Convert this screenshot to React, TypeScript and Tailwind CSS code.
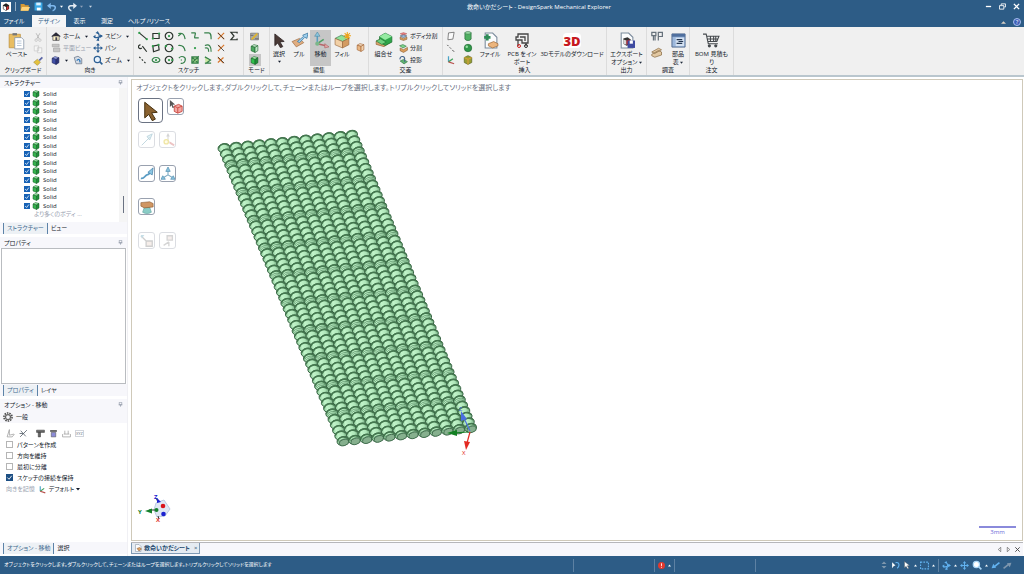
import React from "react";
import clsx from "clsx";

type IconProps = { className?: string; children: React.ReactNode };

const Icon = ({ className = "size-[10px]", children }: IconProps) => (
  <svg viewBox="0 0 16 16" fill="none" stroke="none" className={clsx("shrink-0", className)} aria-hidden="true">
    {children}
  </svg>
);

const Caret = ({ className = "size-[3px] text-gray-800" }: { className?: string }) => (
  <svg viewBox="0 0 8 8" className={clsx("shrink-0", className)} fill="currentColor" aria-hidden="true">
    <path d="M0 2h8L4 7z" />
  </svg>
);

const Cube = ({ className, top = "#8fe29a", left = "#1f8f38", right = "#35b24d", line = "#155c26" }: { className?: string; top?: string; left?: string; right?: string; line?: string }) => (
  <Icon className={className}>
    <path d="M2 4l5-3 7 2-5 3z" fill={top} stroke={line} />
    <path d="M2 4l7 2v9l-7-3z" fill={right} stroke={line} />
    <path d="M9 6l5-3v9l-5 3z" fill={left} stroke={line} />
  </Icon>
);

const Pointer = ({ className, fill = "#4a3a36", stroke = "#2a2020" }: { className?: string; fill?: string; stroke?: string }) => (
  <Icon className={className}>
    <path d="M3 1l10 8-4.500.5 3 5-2.500 1.200-2.800-5L3 13.500z" fill={fill} stroke={stroke} strokeWidth=".8" />
  </Icon>
);

const Move = ({ className = "size-[10px]", color = "#2c5f93" }: { className?: string; color?: string }) => (
  <Icon className={className}>
    <path d="M8 2v12M2 8h12" stroke={color} strokeWidth="1.800" />
    <path d="M8 0l3 4H5zM8 16l3-4H5zM0 8l4-3v6zM16 8l-4-3v6z" fill={color} />
  </Icon>
);

const Spin = ({ className = "size-[10px]", color = "#2c5f93" }: { className?: string; color?: string }) => (
  <Icon className={className}>
    <path d="M7 14c4-3 4-9 0-12M2 10c4 1 9 0 12-3" stroke={color} strokeWidth="2" />
    <path d="M4 3l4-3 1 5zM0 9l4-3v6zM16 8l-5-3v6zM5 15l4-4 1 5z" fill={color} />
  </Icon>
);

const Magnifier = ({ color = "#2c5f93", fill = "#e8f2fb" }) => (
  <Icon className="size-[10px]">
    <circle cx="7" cy="7" r="5" fill={fill} stroke={color} strokeWidth="2" />
    <path d="M11 11l4 4" stroke={color} strokeWidth="2.500" />
  </Icon>
);

const Axes = ({ className }: { className?: string }) => (
  <Icon className={className}>
    <path d="M4 2v9" stroke="#4aa3c7" strokeWidth="2" />
    <path d="M4 11l7-5" stroke="#3fa35c" strokeWidth="2" />
    <path d="M4 11l9 3" stroke="#b8524e" strokeWidth="2" />
  </Icon>
);

const Page = () => <path d="M3 1h7l4 4v10H3z" fill="#fbfcfd" stroke="#7b8b9c" />;

const sketchTools = [
  { name: "線", d: "M2 3l12 10", black: true, dots: [[2, 3], [14, 13]] },
  { name: "長方形", d: "M3 4h10v8H3z", black: true, dots: [[3, 12], [13, 4]] },
  { name: "円", d: "M8 2a6 6 0 1 0 .1 0z", black: true, dots: [[8, 8]] },
  { name: "接線円弧", d: "M2 4c8-2 10 3 11 9M2 8l5-4" },
  { name: "スプライン", d: "M2 3h6c2 0-2 8 0 8h6" },
  { name: "コーナー", d: "M2 3h7c4 0 4 4 4 10" },
  { name: "トリム", d: "M3 3l10 10M3 13L13 3", orange: true },
  { name: "方程式", d: "M13 4V2H3l5 6-5 6h10v-2", black: true },
  { name: "接線", d: "M4 3a3 3 0 1 0 2 5M7 5l7 9", black: true },
  { name: "3点長方形", d: "M3 5l9-2 1 8-9 3z", black: true, dots: [[3, 5], [12, 3]] },
  { name: "3点円", d: "M8 2a6 6 0 1 0 .1 0z", black: true, dots: [[3, 5], [13, 9]] },
  { name: "円弧", d: "M2 4c7-1 10 3 11 9" },
  { name: "点", d: "", dots: [[8, 8]] },
  { name: "オフセット", d: "M3 4c8-3 10 2 10 10M3 8c5-1 6 1 6 6" },
  { name: "分割", d: "M3 13L13 3M4 4l3 3", orange: true },
  null,
  { name: "補助線", d: "M2 3l2 2M6 7l2 2M10 11l2 2", black: true },
  { name: "楕円", d: "M8 4a6 4 0 1 0 .1 0z", dots: [[8, 8]] },
  { name: "多角形", d: "M8 2a6 6 0 1 0 .1 0z", black: true, dots: [[8, 8], [13, 8]] },
  { name: "スイープ円弧", d: "M3 5c4-5 12-2 10 4-1 4-5 5-7 4M6 8h2" },
  { name: "面", d: "M3 3h10v10H3zM3 13L14 2M3 3l10 10", fill: "#9fd08a" },
  { name: "投影", d: "M3 3l9 5-8 6M3 13h10", fill: "#cbe7a4" },
  { name: "曲げ", d: "M3 4l9 9M3 12l9-8", orange: true },
] as ({ name: string; d: string; black?: boolean; orange?: boolean; fill?: string; dots?: number[][] } | null)[];

const Group = ({ label, className, children }: { label: string; className: string; children: React.ReactNode }) => (
  <section className={clsx("flex shrink-0 flex-col border-r border-[#dcdcdc]", className)} aria-label={label}>
    <div className="flex flex-1 items-start pt-[3px]">{children}</div>
    <p className="h-[11px] text-center leading-[9px]">{label}</p>
  </section>
);

const BigButton = ({ icon, children, className }: { icon: React.ReactNode; children: React.ReactNode; className?: string }) => (
  <button className={clsx("flex h-[36px] shrink-0 flex-col items-center pt-[1px] leading-[8px]", className)}>
    <span className="flex h-[19px] items-center">{icon}</span>
    {children}
  </button>
);

const RowButton = ({ icon, text, caret, muted }: { icon: React.ReactNode; text?: string; caret?: boolean; muted?: boolean }) => (
  <button className={clsx("flex h-[12px] items-center gap-[2px] whitespace-nowrap", muted && "text-gray-400")}>
    {icon}
    {text}
    {caret && <Caret className="ml-[3px] size-[3px]" />}
  </button>
);

function TitleBar() {
  return (
    <header className="bg-[#2d5c86] text-white">
      <div className="grid h-[13px] grid-cols-[1fr_auto_1fr] items-center">
        <div className="flex items-center gap-[4px] pl-[1px]">
          <Icon className="size-[10px]">
            <path d="M0 0h16v16H0z" fill="#fff" />
            <path d="M8 2l5 3v6l-5 3-5-3V5z" fill="#222" />
            <path d="M4 6l4 2v5l-4-2z" fill="#fff" />
            <path d="M9 8l3-2v5l-3 2z" fill="#d33" />
          </Icon>
          <span className="h-[9px] w-px bg-white/50" />
          <button aria-label="開く">
            <Icon className="size-[10px]"><path d="M1 3h6l1 2h6v9H1z" fill="#d69a35" /><path d="M3 8h13l-3 6H1z" fill="#ffd57a" /></Icon>
          </button>
          <button aria-label="保存">
            <Icon className="size-[9px]"><path d="M1 1h14v14H1z" fill="#39a7e6" /><path d="M4 1h8v5H4z" fill="#d8f0ff" /><path d="M5 10h7v5H5z" fill="#fff" /></Icon>
          </button>
          <button aria-label="元に戻す" className="flex items-center gap-[3px]">
            <Icon className="size-[10px]"><path d="M3 6h7c5 0 4 7-1 8" stroke="#7fb9ee" strokeWidth="2.500" /><path d="M0 6l6-5v10z" fill="#7fb9ee" /></Icon>
            <Caret className="size-[3px]" />
          </button>
          <button aria-label="やり直し" className="flex items-center gap-[3px]">
            <Icon className="size-[10px]"><path d="M13 6H6C1 6 2 13 7 14" stroke="#e3ebf3" strokeWidth="2.500" /><path d="M16 6l-6-5v10z" fill="#e3ebf3" /></Icon>
            <Caret className="size-[3px] text-slate-400" />
          </button>
          <Caret className="ml-[2px] size-[3px] text-slate-300" />
        </div>
        <h1 className="pl-[54px] text-[6px] leading-[12px]">救命いかだシート - DesignSpark Mechanical Explorer</h1>
        <div className="flex items-center justify-end gap-[7px] pr-[4px]">
          <button aria-label="最小化"><Icon className="size-[7px]"><path d="M2 8h12" stroke="#fff" strokeWidth="3" /></Icon></button>
          <button aria-label="元のサイズに戻す"><Icon className="size-[7px]"><path d="M5 5V2h10v7h-3M1 6h10v8H1z" stroke="#fff" strokeWidth="2" /></Icon></button>
          <button aria-label="閉じる"><Icon className="size-[7px]"><path d="M2 2l12 12M14 2L2 14" stroke="#fff" strokeWidth="3" /></Icon></button>
        </div>
      </div>
      <nav className="flex h-[14px] items-end text-[6px] leading-[12px]">
        <button className="w-[32px] pr-[4px] text-center">ファイル</button>
        <button className="h-[12px] w-[34px] bg-[#f5f6f7] text-center text-[#2d5c86]">デザイン</button>
        <button className="w-[27px] text-center">表示</button>
        <button className="w-[28px] text-center">測定</button>
        <button className="w-[56px] text-center whitespace-nowrap">ヘルプ /リソース</button>
        <div className="ml-auto flex items-center gap-[7px] pr-[3px] pb-[1px]">
          <Icon className="size-[5px]"><path d="M0 12h16L8 4z" fill="#d9d0c4" /></Icon>
          <button aria-label="ヘルプ" className="size-[8px] rounded-full border border-[#a9c0ee] bg-[#3f60b8] text-center leading-[6px]">?</button>
        </div>
      </nav>
    </header>
  );
}

function Ribbon() {
  return (
    <div className="flex h-[50px] overflow-hidden border-b-2 border-[#b9c6ce] bg-[#f0f0f0] text-[6px] text-gray-900">
      <Group label="クリップボード" className="w-[47px]">
        <BigButton className="w-[33px]" icon={<Icon className="size-[18px]"><path d="M1 2h10v12H1z" fill="#e8bd62" stroke="#b98a35" strokeWidth=".6" /><path d="M4 1h4v2H4z" fill="#777" /><path d="M6 5h6l2 2v8H6z" fill="#fff" stroke="#8797aa" strokeWidth=".7" /><path d="M8 8h4M8 10h4M8 12h4" stroke="#9aaec5" strokeWidth=".6" /></Icon>}>ペースト</BigButton>
        <div className="flex flex-col gap-[2px] pt-[2px]">
          <Icon><path d="M5 2l5 9M11 2L6 11" stroke="#b9b9b9" strokeWidth="1.500" /><circle cx="5" cy="13" r="2" stroke="#b9b9b9" /><circle cx="11" cy="13" r="2" stroke="#b9b9b9" /></Icon>
          <Icon><path d="M2 3h7v8H2zM7 6h7v8H7z" fill="#f6f6f6" stroke="#c4c4c4" /></Icon>
          <Icon><path d="M9 6l5-5 2 2-5 5z" fill="#5b66a6" /><path d="M1 10l6-5 5 5-5 5z" fill="#e4c23f" stroke="#7a6920" strokeWidth=".6" /></Icon>
        </div>
      </Group>
      <Group label="向き" className="w-[87px]">
        <div className="flex w-[44px] flex-col pl-[4px]">
          <RowButton icon={<Icon><path d="M1 8l7-6 7 6v1H1z" fill="#2b2b38" /><path d="M3 8h10v7H3z" fill="#fff4c8" stroke="#33333d" /><path d="M7 10h3v5H7z" fill="#445" /></Icon>} text="ホーム" caret />
          <RowButton muted icon={<Icon><path d="M2 2h11v4H2zM4 8h10v6H4z" fill="#c6c6c6" stroke="#a2a2a2" /></Icon>} text="平面ビュー" />
          <div className="flex gap-[5px]">
            <RowButton icon={<Cube className="size-[9px]" top="#9aa6e8" left="#2b3479" right="#4150a8" line="#1c2459" />} caret />
            <Icon className="mt-[1px] size-[10px]"><path d="M2 4l6-2 6 4v8H5z" fill="#d6dde6" stroke="#4b5c72" /><path d="M6 9c3-4 6-1 5 3" stroke="#2673b8" strokeWidth="2" /></Icon>
          </div>
        </div>
        <div className="flex flex-col pl-[2px]">
          <RowButton icon={<Spin />} text="スピン" caret />
          <RowButton icon={<Move />} text="パン" />
          <RowButton icon={<Magnifier />} text="ズーム" caret />
        </div>
      </Group>
      <Group label="スケッチ" className="w-[110px]">
        <div className="grid w-full grid-cols-8 px-[2px]">
          {sketchTools.map((tool, i) =>
            tool ? (
              <button key={tool.name} aria-label={tool.name} className="flex h-[12px] items-center justify-center">
                <Icon className="size-[10px]">
                  <path d={tool.d} fill={tool.fill} stroke={tool.orange ? "#d9772b" : tool.black ? "#2b332d" : "#36804a"} strokeWidth="1.900" />
                  {tool.orange && <path d="M3 3l10 10" stroke="#3a3a3a" strokeWidth="1.300" />}
                  {tool.dots?.map(([x, y]) => <circle key={x} cx={x} cy={y} r="1.800" fill="#2f9c4a" />)}
                </Icon>
              </button>
            ) : (
              <span key={i} />
            )
          )}
        </div>
      </Group>
      <Group label="モード" className="w-[26px]">
        <div className="flex w-full flex-col items-center pr-[4px]">
          <button aria-label="スケッチモード" className="flex size-[12px] items-center justify-center"><Icon className="size-[9px]"><path d="M1 2h14v12H1z" fill="#a9a9a9" stroke="#666" /><path d="M3 13L13 3" stroke="#e0b52c" strokeWidth="3" /><path d="M1 6h5M9 12h6" stroke="#444" /></Icon></button>
          <button aria-label="断面モード" className="flex size-[12px] items-center justify-center"><Cube className="size-[9px]" top="#c9edcf" right="#4ea961" left="#bfe6c6" /></button>
          <button aria-label="3Dモード" className="flex size-[12px] items-center justify-center bg-[#c6c6c6]"><Cube className="size-[9px]" top="#b4f5b6" right="#2fc04c" /></button>
        </div>
      </Group>
      <Group label="編集" className="w-[99px]">
        <BigButton className="w-[18px]" icon={<Pointer className="size-[15px]" />}>選択<Caret className="mt-[2px] size-[3px]" /></BigButton>
        <BigButton className="w-[22px]" icon={<Icon className="size-[17px]"><path d="M1 9l7-3 4 4-7 4z" fill="#e0ad80" stroke="#98683f" strokeWidth=".6" /><path d="M6 9l6-5-1-1 5-2-1 5-2-1-5 5z" fill="#9fd0ee" stroke="#39759f" strokeWidth=".7" /></Icon>}>プル</BigButton>
        <BigButton className="w-[21px] bg-[#c6c6c6]" icon={<Icon className="size-[17px]"><path d="M5 3v8" stroke="#5a9fc0" strokeWidth="1.500" /><path d="M5 0l2.500 4h-5z" fill="#8cc6de" stroke="#45809d" strokeWidth=".5" /><path d="M5 11l6-4" stroke="#4e9f64" strokeWidth="1.500" /><path d="M5 11l8 2" stroke="#b5666b" strokeWidth="1.500" /><path d="M12 11l4 3-4 1z" fill="#e2a4a8" stroke="#a55" strokeWidth=".5" /><circle cx="5" cy="11" r="2" fill="#7bb78a" /></Icon>}>移動</BigButton>
        <BigButton className="w-[22px]" icon={<Icon className="size-[17px]"><path d="M1 6l6-3 7 3-6 3z" fill="#8fe29a" stroke="#347043" strokeWidth=".6" /><path d="M1 6l7 3v6l-7-3z" fill="#f2d0a6" stroke="#98683f" strokeWidth=".6" /><path d="M8 9l6-3v6l-6 3z" fill="#d39b62" stroke="#98683f" strokeWidth=".6" /><path d="M12.500 0v7M9 3.500h7M10 1l5 5M15 1l-5 5" stroke="#eda31b" /></Icon>}>フィル</BigButton>
        <button aria-label="シェル" className="mt-[13px] ml-[3px]"><Cube className="size-[9px]" top="#f5dfc5" right="#eab784" left="#f3d2ad" line="#9b5b2b" /></button>
      </Group>
      <Group label="交差" className="w-[74px]">
        <BigButton className="w-[29px]" icon={<Icon className="size-[18px]"><path d="M1 8l5-2 8 3-6 4-7-2z" fill="#d8a36d" stroke="#84552c" strokeWidth=".5" /><path d="M4 4l5-3 6 3v5l-6 3-5-3z" fill="#2fa64a" stroke="#1b6b2f" strokeWidth=".6" /><path d="M4 4l5-3 6 3-6 3z" fill="#95eaa2" /><path d="M1 8l4-2 5 3-4 2z" fill="#6ed17f" stroke="#1b6b2f" strokeWidth=".5" /></Icon>}>組合せ</BigButton>
        <div className="flex flex-col pl-[1px]">
          <RowButton icon={<Icon className="size-[9px]"><path d="M2 3l6-2 6 2-6 3z" fill="#e98080" stroke="#933" strokeWidth=".6" /><path d="M2 7l6 3 6-3-6-2z" fill="#9dbbe0" stroke="#456" /><path d="M2 9l6 3 6-3v4l-6 2-6-2z" fill="#d9a15e" stroke="#84552c" /></Icon>} text="ボディ分割" />
          <RowButton icon={<Icon className="size-[9px]"><path d="M1 3l6-2 6 3-6 3z" fill="#7fd58d" stroke="#286f39" /><path d="M2 7l6 3 7-4v5l-7 4-6-3z" fill="#db9e5d" stroke="#84552c" /></Icon>} text="分割" />
          <RowButton icon={<Icon className="size-[9px]"><path d="M2 9l6-3 7 4-6 4z" fill="#61b272" stroke="#286f39" /><path d="M2 6a4 4 0 0 1 8-2v6" stroke="#44658d" strokeWidth="2" /></Icon>} text="投影" />
        </div>
      </Group>
      <Group label="挿入" className="w-[164px]">
        <div className="grid w-[33px] shrink-0 grid-cols-2 place-items-center">
          <Icon className="my-[1px] size-[10px]"><path d="M4 3l9-1-2 11-8 1z" fill="#fafafa" stroke="#444" /></Icon>
          <Icon className="my-[1px] size-[10px]"><path d="M3 3h10v10c-2 3-8 3-10 0z" fill="#4eaf60" stroke="#1d6430" /><ellipse cx="8" cy="3" rx="5" ry="2" fill="#a9e6b1" stroke="#1d6430" /></Icon>
          <Icon className="my-[1px] size-[10px]"><path d="M2 3l2 2M6 7l2 2M10 11l3 3" stroke="#444" strokeWidth="1.500" /></Icon>
          <Icon className="my-[1px] size-[10px]"><circle cx="8" cy="8" r="6" fill="#2f9848" stroke="#1d6430" /><circle cx="6" cy="6" r="2" fill="#9adea5" /></Icon>
          <Axes className="my-[1px] size-[10px]" />
          <Icon className="my-[1px] size-[10px]"><path d="M2 4l6-3 6 3v8l-6 3-6-3z" fill="#9a9e33" stroke="#4f5d1e" /><path d="M8 7v8M2 4l6 3 6-3" stroke="#d2a13b" strokeWidth="2" /></Icon>
        </div>
        <BigButton className="w-[28px]" icon={<Icon className="size-[17px]"><Page /><path d="M6 11l5-2 4 2v2l-5 2-4-2z" fill="#ecb57d" stroke="#955e2d" strokeWidth=".6" /><path d="M5 2v6M2 5h6" stroke="#2e8b57" strokeWidth="2.500" /></Icon>}>ファイル</BigButton>
        <BigButton className="w-[36px]" icon={<Icon className="size-[16px]"><path d="M4 1h10v9H8V7H2V4h2zM6 4h5v4M4 7v6M12 10v3" stroke="#454545" strokeWidth="1.300" /><circle cx="5" cy="13" r="1.500" stroke="#c22" /><circle cx="12" cy="13" r="1.500" stroke="#333" /></Icon>}><span>PCB をイン<br />ポート</span></BigButton>
        <BigButton className="w-[64px]" icon={<span className="flex h-[15px] w-[18px] items-center justify-center rounded-sm bg-white text-[13px] font-black text-[#c71920]">3D</span>}><span className="whitespace-nowrap">3Dモデルのダウンロード</span></BigButton>
      </Group>
      <Group label="出力" className="w-[40px]">
        <BigButton className="w-full" icon={<Icon className="size-[17px]"><Page /><path d="M5 6l4-1 3 2v5l-4 1-3-2z" fill="#333" /><path d="M5 7l3 1v4l-3-1z" fill="#d9d9d9" /><path d="M8 8l3-1v4l-3 1z" fill="#c22" /><path d="M9 8h7v7H9z" fill="#3e4aa0" /><path d="M11 8h3v3h-3z" fill="#fff" /></Icon>}>
          <span className="whitespace-nowrap">エクスポート<br />オプション <span className="inline-block"><Caret /></span></span>
        </BigButton>
      </Group>
      <Group label="調査" className="w-[43px]">
        <div className="flex w-[20px] flex-col items-center gap-[3px]">
          <button aria-label="測定"><Icon className="size-[13px]"><path d="M1 3h5v4H1zM3 7v6M5 7v6M9 2v11M9 3h5v5H9" stroke="#66717b" strokeWidth="1.500" /></Icon></button>
          <button aria-label="質量"><Icon className="size-[12px]"><path d="M1 8l9-5 4 2-9 5zM1 11l9-5 4 2v4l-9 3-4-2z" fill="#e2c8a2" stroke="#8e7048" /></Icon></button>
        </div>
        <BigButton className="w-[22px]" icon={<Icon className="size-[15px]"><path d="M1 1h14v14H1z" fill="#9db8dc" stroke="#526a8e" /><path d="M1 1h14v3H1z" fill="#4f6f9e" /><path d="M5 5h9v9H5z" fill="#d5e2f2" /><path d="M6 7h6M8 9h5M6 11h6" stroke="#263852" strokeWidth="1.200" /></Icon>}><span>部品<br />表 <span className="inline-block"><Caret /></span></span></BigButton>
      </Group>
      <Group label="注文" className="w-[44px]">
        <BigButton className="w-full" icon={<Icon className="size-[17px]"><path d="M0 2h3l2 9h9M4 4h11l-2 5H5M7 4v5M10 4v5M12 4v5M4 6.500h10" stroke="#45494d" /><circle cx="6" cy="13" r="1.500" fill="#45494d" /><circle cx="12" cy="13" r="1.500" fill="#45494d" /></Icon>}><span className="whitespace-nowrap">BOM 見積も<br />り</span></BigButton>
      </Group>
    </div>
  );
}

const PanelTitle = ({ children }: { children: React.ReactNode }) => (
  <div className="flex h-[11px] items-center justify-between bg-[#f7f7fb] px-[4px]">
    <h2>{children}</h2>
    <button aria-label="ピン留め"><Icon className="size-[5px]"><path d="M4 1h8v8H4zM2 9h12M8 9v6" stroke="#8791a1" strokeWidth="2" /></Icon></button>
  </div>
);

const PanelTabs = ({ active, other }: { active: string; other: string }) => (
  <div className="flex h-[12px] items-center bg-[#f7f7fb] pl-[3px]">
    <button className="h-[11px] border-x border-[#5d83a8] bg-[#edf1f5] px-[3px] text-[#41698f]">{active}</button>
    <button className="px-[3px]">{other}</button>
  </div>
);

const options = [
  { label: "パターンを作成", on: false },
  { label: "方向を維持", on: false },
  { label: "最初に分離", on: false },
  { label: "スケッチの接続を保持", on: true },
];

const Tick = ({ className }: { className: string }) => (
  <svg viewBox="0 0 8 8" className={clsx("pointer-events-none absolute inset-0", className)} fill="none" stroke="#fff" aria-hidden="true">
    <path d="M1.500 4l2 2 3-4" />
  </svg>
);

function SidePanel() {
  return (
    <aside className="flex w-[128px] shrink-0 flex-col border-r border-[#f0f0f4] text-[6px] leading-[10px] text-gray-900">
      <PanelTitle>ストラクチャー</PanelTitle>
      <div className="flex h-[134px]">
        <div className="flex flex-1 flex-col pt-[2px]">
          <ul className="flex h-[120px] flex-col">
            {Array.from({ length: 14 }, (_, i) => (
              <li key={i} className="flex min-h-0 flex-1 items-center pl-[24px]">
                <label className="flex items-center text-[6px] leading-[8px]">
                  <span className="relative size-[6px]">
                    <input type="checkbox" defaultChecked className="block size-[6px] appearance-none bg-[#1762b5]" />
                    <Tick className="size-[6px]" />
                  </span>
                  <Cube className="mr-[3px] ml-[2px] size-[8px]" />
                  Solid
                </label>
              </li>
            ))}
          </ul>
          <p className="pl-[34px] leading-[8px] text-gray-400">より多くのボディ ...</p>
        </div>
        <div className="flex w-[8px] justify-center bg-[#f5f5f5] pt-[108px]">
          <span className="h-[17px] w-px bg-gray-500" />
        </div>
      </div>
      <PanelTabs active="ストラクチャー" other="ビュー" />
      <div className="h-[3px]" />
      <PanelTitle>プロパティ</PanelTitle>
      <div className="mx-[1px] h-[136px] border border-[#b9bcc0] bg-white" />
      <PanelTabs active="プロパティ" other="レイヤ" />
      <div className="h-[3px]" />
      <PanelTitle>オプション - 移動</PanelTitle>
      <div className="flex h-[13px] items-center gap-[3px] bg-[#f7f7fb] pl-[3px]">
        <Icon>
          <circle cx="8" cy="8" r="6.500" stroke="#4c4c4c" strokeWidth="2.500" strokeDasharray="2.500 1.500" />
          <circle cx="8" cy="8" r="4" stroke="#666" strokeWidth="2" />
        </Icon>
        一般
      </div>
      <div className="flex flex-1 flex-col pt-[4px] pl-[6px]">
        <div className="flex h-[12px] items-center gap-[4px]">
          <Icon className="size-[9px]"><path d="M6 1v10M6 11l8-2M2 14h9l4-5M6 1L2 14" stroke="#999" strokeWidth="1.300" /></Icon>
          <Icon className="size-[9px]"><path d="M2 14L14 2M3 3l9 10M1 8h8" stroke="#5b6570" strokeWidth="1.500" /></Icon>
          <Icon className="ml-[4px] size-[9px]"><path d="M1 2h14v4H1zM4 6h4v8H4z" fill="#666" stroke="#444" /></Icon>
          <Icon className="size-[9px]"><path d="M2 2h12v3H2z" fill="#555" /><path d="M4 6h8v8H4z" fill="#8b8bd8" stroke="#555" /></Icon>
          <Icon className="size-[9px]"><path d="M1 9v5h14V9M5 9V3M11 9V3M3 9h10" stroke="#999" strokeWidth="1.300" /></Icon>
          <span className="border border-gray-300 text-[4px] leading-[5px] text-gray-500">XYZ</span>
        </div>
        {options.map((o) => (
          <label key={o.label} className="flex h-[11px] items-center gap-[4px]">
            <span className="relative size-[7px]">
              <input type="checkbox" defaultChecked={o.on} className="block size-[7px] appearance-none border border-[#b5b5b5] bg-white checked:border-[#1d4f84] checked:bg-[#1d4f84]" />
              {o.on && <Tick className="size-[7px]" />}
            </span>
            {o.label}
          </label>
        ))}
        <div className="flex h-[12px] items-center gap-[3px]">
          <span className="text-gray-400">向きを記憶</span>
          <button className="flex items-center gap-[2px]">
            <Axes className="size-[9px]" />
            デフォルト
            <Caret className="size-[4px]" />
          </button>
        </div>
      </div>
      <PanelTabs active="オプション - 移動" other="選択" />
      <div className="h-[2px]" />
    </aside>
  );
}

// one float tube: stacked rings running from the far end to the near cap
const Tube = ({ x, y }: { x: number; y: number }) => {
  const steps = 54;
  return (
    <g>
      {Array.from({ length: steps }, (_, i) => {
        const cx = x + (i * 119) / (steps - 1);
        const cy = y + (i * 293) / (steps - 1);
        const seam = i % 5 === 3;
        return (
          <g key={i} transform={`translate(${cx} ${cy}) rotate(-14)`}>
            <ellipse rx="6" ry="4.400" fill="url(#ring)" stroke="#33603f" strokeWidth=".9" />
            <path d="M-5.500-1C-3-5 3-5 5.500-1" stroke="#44784f" strokeWidth="1.500" fill="none" />
            {seam && <path d="M-5 .2C-2-2.400 2-2.400 5 .2M-4 1.500C-2-.6 2-.6 4 1.500" stroke="#568a62" strokeWidth=".7" fill="none" />}
          </g>
        );
      })}
      <ellipse cx={x + 120} cy={y + 294.500} rx="4.800" ry="3.100" fill="#86b08e" stroke="#426e4f" strokeWidth=".9" transform={`rotate(-16 ${x + 120} ${y + 294.500})`} />
    </g>
  );
};

const Model = () => (
  <svg viewBox="210 120 280 345" className="absolute top-[40px] left-[78px] h-[345px] w-[280px]" role="img" aria-label="救命いかだシート">
    <defs>
      <linearGradient id="ring" x1="0" x2="1">
        <stop offset="0" stopColor="#8cc798" />
        <stop offset=".3" stopColor="#c2f5ca" />
        <stop offset=".7" stopColor="#aee5b8" />
        <stop offset="1" stopColor="#6ea57a" />
      </linearGradient>
    </defs>
    {Array.from({ length: 12 }, (_, i) => (
      <Tube key={i} x={224 + i * 11.600} y={148 - i * 1.200} />
    ))}
    <path d="M470 431l-7-15" stroke="#4b6fe0" strokeWidth="1.200" />
    <path d="M461 411l6 8-6 2z" fill="#4b6fe0" />
    <path d="M468 432l-16 1" stroke="#128022" strokeWidth="1" />
    <path d="M447 433l10-3v6z" fill="#128022" />
    <path d="M470 432l-3 11" stroke="#e32a22" strokeWidth="1.200" />
    <path d="M466 450l-2-9 6 1z" fill="#e32a22" />
    <text x="459" y="411" fontSize="6" fill="#4b6fe0">Z</text>
    <text x="462" y="455" fontSize="6" fill="#e32a22">X</text>
  </svg>
);

const AxisBall = () => (
  <svg viewBox="135 490 40 36" className="absolute bottom-[14px] left-[3px] h-[36px] w-[40px]" role="img" aria-label="座標軸">
    <path d="M156 503l8-3 6 9-5 7-8 1-3-7z" fill="#dfe7f4" stroke="#bccbe2" />
    <path d="M158 502l-2-4M156 510h-7M158 516l1 3" stroke="#333" />
    <path d="M145 511l7-2.500v5z" fill="#14802a" />
    <path d="M157 498l4 4-4 1z" fill="#1c22d0" />
    <circle cx="156.500" cy="510" r="2" fill="#14802a" />
    <circle cx="163" cy="506" r="2.300" fill="#d9141b" />
    <circle cx="163.500" cy="514" r="2.300" fill="#1c22d0" />
    <text x="154" y="499" fontSize="6" fontWeight="700" fill="#1c22d0">Z</text>
    <text x="138" y="514" fontSize="6" fontWeight="700" fill="#14802a">Y</text>
    <text x="156" y="522" fontSize="6" fontWeight="700" fill="#e0392f">X</text>
  </svg>
);

const Tool = ({ label, disabled, children }: { label: string; disabled?: boolean; children: React.ReactNode }) => (
  <button aria-label={label} disabled={disabled} className="flex size-[17px] items-center justify-center rounded-[3px] border border-gray-400 bg-white disabled:opacity-35">
    <Icon className="size-[14px]">{children}</Icon>
  </button>
);

function Canvas() {
  return (
    <main className="relative flex-1 border border-[#cfc9b9] bg-white">
      <p className="pt-[2px] pl-[4px] text-[7px] leading-[12px] text-gray-500">
        オブジェクトをクリックします。ダブルクリックして、チェーンまたはループを選択します。トリプルクリックしてソリッドを選択します
      </p>
      <div className="flex w-[60px] flex-col pt-[4px] pl-[6px]">
        <div className="flex h-[33px] items-start gap-[4px]">
          <button aria-label="選択" className="flex size-[25px] items-center justify-center rounded-[4px] border border-gray-500 bg-white">
            <Pointer className="size-[20px]" fill="#8a6230" stroke="#46300f" />
          </button>
          <Tool label="コンポーネントを選択">
            <path d="M1 0l6 5-3 .5 2 3-2 .5-1-3-2 2z" fill="#555" />
            <path d="M6 7l5-2 4 2v6l-5 2-4-2z" fill="#f2a7a2" stroke="#c8473f" />
            <path d="M6 7l4 2 5-2M10 9v6" stroke="#c8473f" />
          </Tool>
        </div>
        <div className="flex h-[34px] gap-[4px]">
          <Tool label="移動方向" disabled><path d="M2 14L11 5M8 4l6-3-3 7z" stroke="#3d85a0" fill="#b5dbe5" /></Tool>
          <Tool label="アンカー" disabled><path d="M8 9V2M8 9l6 5" stroke="#777" /><circle cx="6" cy="10" r="2.500" fill="#fff8bd" stroke="#d5b800" strokeWidth="1.500" /><path d="M8 0l2 4H6z" fill="#888" /><path d="M10 11l5 3" stroke="#c55" strokeWidth="2" /></Tool>
        </div>
        <div className="flex h-[33px] gap-[4px]">
          <Tool label="軌道に沿って移動"><path d="M1 13c4 1 4-3 7-4 3 0 3-3 4-4" stroke="#5a9cc4" strokeWidth="2" /><path d="M9 6l6-5-1 8z" fill="#8cc6e2" stroke="#3d7ea8" strokeWidth=".8" /></Tool>
          <Tool label="放射状に移動"><path d="M8 9V3M8 9l-5 3M8 9l5 3" stroke="#7aa9c2" strokeWidth="1.200" /><path d="M8 0l2.500 5h-5zM0 14l2-4 3 4zM16 14l-2-4-3 4z" fill="#8cc6e2" stroke="#4f8cae" strokeWidth=".8" /></Tool>
        </div>
        <div className="flex h-[34px]">
          <Tool label="支点"><path d="M5 8h6l2 6c-3 2-7 2-10 0z" fill="#8accc6" stroke="#4f9792" strokeWidth=".6" /><path d="M1 3l10-1 4 2v4l-10 1-4-2z" fill="#d09663" stroke="#7c4d22" strokeWidth=".6" /></Tool>
        </div>
        <div className="flex gap-[4px]">
          <Tool label="面まで" disabled><path d="M1 2l6 6M7 8h7v6H7z" stroke="#777" strokeWidth="1.500" fill="#e6cfc4" /><path d="M1 1h4l-3 4z" fill="#5ba2bd" /></Tool>
          <Tool label="向きを合わせる" disabled><path d="M7 2h6v5H7zM3 13l6-4M9 9v5" stroke="#888" strokeWidth="1.500" fill="#e8d2cc" /></Tool>
        </div>
      </div>
      <Model />
      <AxisBall />
      <div className="absolute right-[6px] bottom-[3px] w-[37px] border-t-2 border-[#8a8adb] text-center text-[6px] leading-[9px] text-[#6b6bd8]">3mm</div>
    </main>
  );
}

function DocumentTabs() {
  return (
    <div className="mt-[1px] flex h-[14px] items-start border-t border-[#b6b6ba] bg-[#f7f7fb] text-[6px]">
      <button className="flex h-[11px] items-center gap-[2px] border border-t-0 border-[#7f9ab5] bg-[#e5ebf2] px-[2px] font-bold text-[#24496e]">
        <Icon className="size-[8px]"><Page /><path d="M6 9l5-2 4 3-5 4z" fill="#dda263" stroke="#84552c" /></Icon>
        救命いかだシート
        <span className="pl-[2px] font-normal">×</span>
      </button>
      <div className="ml-auto flex items-center gap-[4px] self-center pr-[3px]">
        <button aria-label="前へ"><Icon className="size-[5px]"><path d="M12 1v14L4 8z" stroke="#555" strokeWidth="2" /></Icon></button>
        <button aria-label="次へ"><Icon className="size-[5px]"><path d="M4 1v14l8-7z" stroke="#555" strokeWidth="2" /></Icon></button>
        <button aria-label="閉じる"><Icon className="size-[5px]"><path d="M1 1l14 14M15 1L1 15" stroke="#444" strokeWidth="3" /></Icon></button>
      </div>
    </div>
  );
}

const UpCaret = () => <Icon className="size-[3px]"><path d="M0 13h16L8 3z" fill="#fff" /></Icon>;

function StatusBar() {
  return (
    <footer className="flex h-[18px] items-center bg-[#2d5c86] text-[5px] text-white">
      <p className="w-[56%] pl-[4px] whitespace-nowrap">
        オブジェクトをクリックします。ダブルクリックして、チェーンまたはループを選択します。トリプルクリックしてソリッドを選択します
      </p>
      <div className="h-[13px] w-[82px] border-x border-[#5d81a3]" />
      <button aria-label="エラー" className="flex h-[13px] w-[20px] items-center justify-center gap-[3px] border-r border-[#5d81a3]">
        <Icon className="size-[7px]"><circle cx="8" cy="8" r="8" fill="#e2392e" /><path d="M8 3v6M8 11v2" stroke="#fff" strokeWidth="2" /></Icon>
        <UpCaret />
      </button>
      <div className="h-[13px] w-[81px] border-r border-[#5d81a3]" />
      <div className="ml-auto flex items-center gap-[3px] pr-[12px]">
        <Icon className="size-[8px]"><path d="M3 6h10L8 1zM3 10h10l-5 5z" fill="#7f97ae" /></Icon>
        <Icon className="size-[9px]"><path d="M2 2l6 6-3 1-3 4z" fill="#fff" /><path d="M8 3c7-2 8 6 3 10" stroke="#62b2f0" strokeWidth="2" /></Icon>
        <Pointer className="size-[8px]" fill="#fff" stroke="#555" />
        <UpCaret />
        <Icon className="size-[9px]"><path d="M1 2h14v12H1z" stroke="#62b2f0" strokeWidth="2" strokeDasharray="3 2" /></Icon>
        <UpCaret />
        <span className="h-[13px] w-px bg-[#5d81a3]" />
        <Spin className="size-[9px]" color="#62b2f0" />
        <UpCaret />
        <Move className="size-[9px]" color="#62b2f0" />
        <Magnifier color="#a9d6f7" fill="#fff" />
        <UpCaret />
        <Icon className="size-[9px]"><path d="M15 3L6 10" stroke="#62b2f0" strokeWidth="3" /><path d="M1 13l3-8 5 7z" fill="#62b2f0" /></Icon>
        <Icon className="size-[9px]"><path d="M1 13l9-7" stroke="#7f97ae" strokeWidth="3" /><path d="M15 3l-3 8-5-7z" fill="#7f97ae" /></Icon>
      </div>
    </footer>
  );
}

export default function App() {
  return (
    <div lang="ja" className="flex min-h-screen flex-col bg-white pb-[2px] font-['Open_Sans','Noto_Sans_CJK_JP',sans-serif] [font-feature-settings:'palt']">
      <TitleBar />
      <Ribbon />
      <div className="flex flex-1">
        <SidePanel />
        <div className="flex min-w-0 flex-1 flex-col pt-[2px] pr-[1px] pl-[3px]">
          <Canvas />
          <DocumentTabs />
        </div>
      </div>
      <StatusBar />
    </div>
  );
}
